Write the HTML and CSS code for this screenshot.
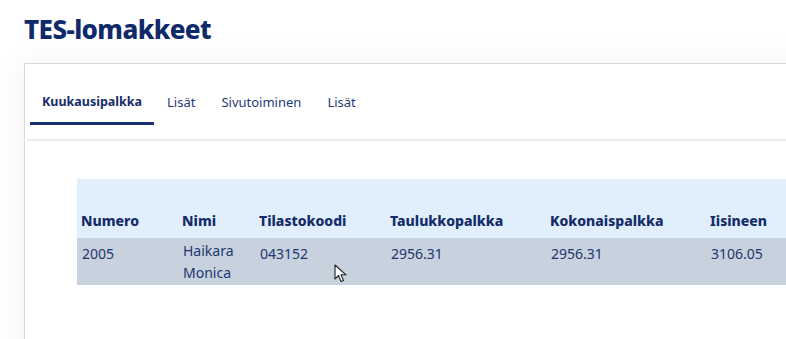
FILE: index.html
```html
<!DOCTYPE html>
<html lang="fi">
<head>
    <meta charset="UTF-8">
    <title>TES-lomakkeet</title>
    <link rel="stylesheet" href="styles.css">
</head>
<body>
    <div class="page">
        <h1 class="title">TES-lomakkeet</h1>

        <div class="card">
            <nav class="tabs">
                <a class="tab active">Kuukausipalkka</a>
                <a class="tab">Lisät</a>
                <a class="tab">Sivutoiminen</a>
                <a class="tab">Lisät</a>
            </nav>

            <div class="table-wrap">
                <table class="pay-table">
                    <colgroup>
                        <col class="c-num">
                        <col class="c-name">
                        <col class="c-code">
                        <col class="c-wide">
                        <col class="c-wide">
                        <col class="c-rest">
                    </colgroup>
                    <thead>
                        <tr>
                            <th>Numero</th>
                            <th>Nimi</th>
                            <th>Tilastokoodi</th>
                            <th>Taulukkopalkka</th>
                            <th>Kokonaispalkka</th>
                            <th>Iisineen</th>
                        </tr>
                    </thead>
                    <tbody>
                        <tr>
                            <td class="num">2005</td>
                            <td>Haikara Monica</td>
                            <td class="num">043152</td>
                            <td class="num">2956.31</td>
                            <td class="num">2956.31</td>
                            <td class="num">3106.05</td>
                        </tr>
                    </tbody>
                </table>
            </div>
        </div>
    </div>

    <!-- hiiren osoitin -->
    <svg class="cursor" width="14" height="20" viewBox="0 0 14 20">
        <path d="M1 1 L1 15 L4.5 11.5 L7 17.5 L9.5 16.5 L7 10.8 L12 10.8 Z" fill="#fff" stroke="#222" stroke-width="1.1" stroke-linejoin="round"/>
    </svg>
</body>
</html>
```

FILE: styles.css
```css
* { margin: 0; padding: 0; box-sizing: border-box; }
html, body {
    height: 100%;
    overflow: hidden;
}
body {
    background: #fff;
    color: #142f6c;
    font-family: "Noto Sans", "DejaVu Sans", sans-serif;
    position: relative;
}
.page {
    padding: 13px 0 0 24px;
}
.title {
    font-size: 26px;
    font-weight: 800;
    color: #0f2a6b;
    line-height: 32px;
    letter-spacing: -0.6px;
    margin-bottom: 18px;
}
.card {
    width: 900px;
    height: 400px;
    background: #fff;
    border-top: 1px solid #d9d9d9;
    border-left: 1px solid #d9d9d9;
    box-shadow: 0 0 34px rgba(0, 0, 0, 0.06);
    padding-left: 2px;
}
.tabs {
    display: flex;
    padding: 27px 0 14px 3px;
    border-bottom: 2px solid #ececec;
}
.tab {
    display: block;
    padding: 0 13px 9px;
    font-size: 13px;
    line-height: 22px;
    color: #1f3a78;
    border-bottom: 3px solid transparent;
    cursor: pointer;
}
.tab.active {
    padding: 0 12px 9px;
    font-size: 12.5px;
    font-weight: 700;
    color: #152d6a;
    border-bottom-color: #17306f;
}
.table-wrap {
    padding: 38px 0 0 50px;
}
.pay-table {
    border-collapse: collapse;
    table-layout: fixed;
    width: 800px;
    font-size: 14px;
}
.c-num { width: 101px; }
.c-name { width: 77px; }
.c-code { width: 131px; }
.c-wide { width: 160px; }
.pay-table thead tr {
    background: #e1effd;
}
.pay-table th {
    text-align: left;
    vertical-align: bottom;
    height: 59px;
    padding: 0 4px 8px;
    font-weight: 800;
    color: #132c69;
}
.pay-table tbody tr {
    background: #c8d1de;
}
.pay-table td {
    vertical-align: top;
    padding: 2px 5px 1px;
    line-height: 22px;
    color: #21376f;
}
.pay-table td.num {
    padding-top: 5px;
}
.cursor {
    position: absolute;
    left: 334px;
    top: 264px;
}
```
